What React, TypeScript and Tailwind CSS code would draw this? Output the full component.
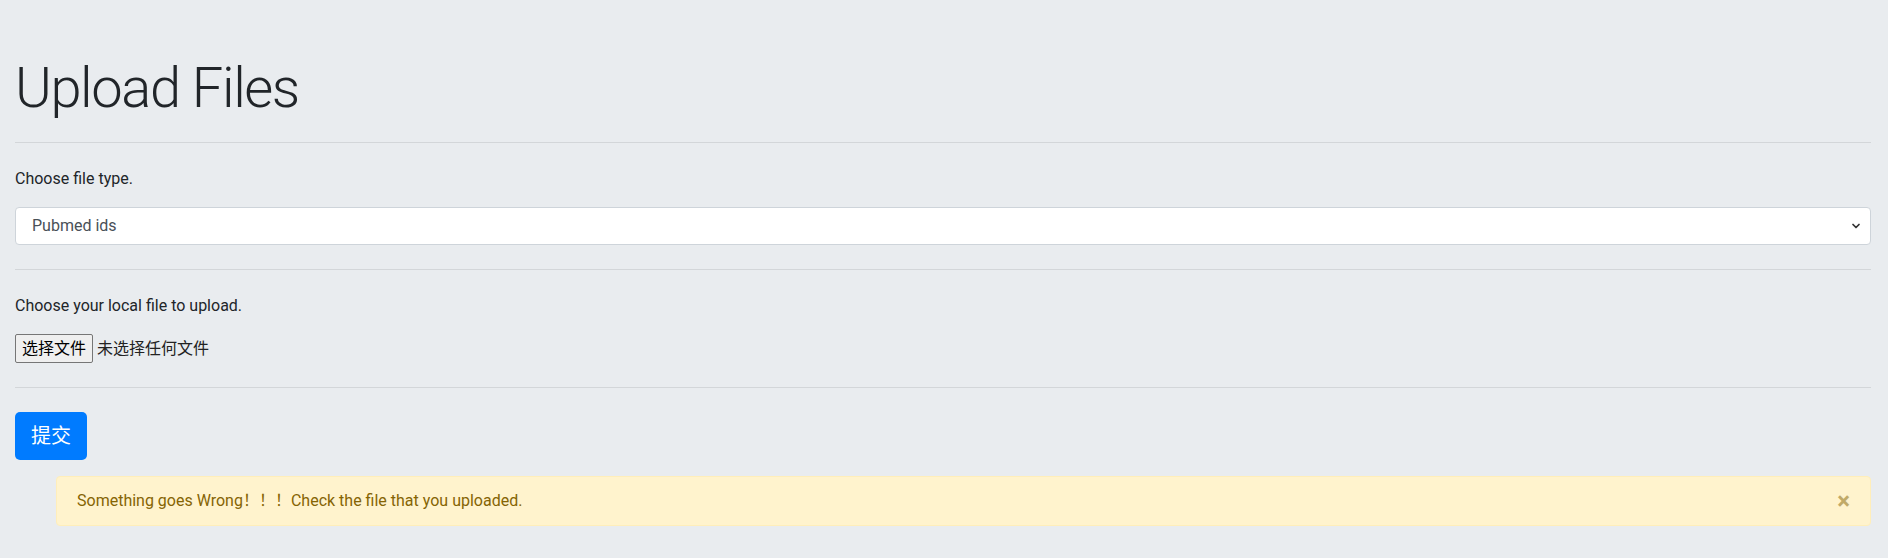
import { ChevronDown } from 'lucide-react';

const App = () => {
    return (
        <div className="min-h-[558px] bg-[#e9ecef] pl-[15px] pr-[17px] pt-[55px] pb-4 text-[16px] leading-6 text-[#212529] [font-family:Roboto,'Noto_Sans_CJK_SC',sans-serif]">
            <h1 className="mb-2 text-[56px] font-light leading-[1.2] tracking-[-1.4px]">Upload Files</h1>
            <hr className="mt-[20px] mb-6 border-t border-[#d3d6d9]" />

            <form>
                <div>
                    <label className="mb-4 block">Choose file type.</label>
                    <div className="relative">
                        <select
                            defaultValue="pubmed"
                            className="block h-[38px] w-full appearance-none rounded-[4px] border border-[#ced4da] bg-white pl-4 pr-8 text-[#495057]">
                            <option value="pubmed">Pubmed ids</option>
                            <option value="pmc">PMC ids</option>
                        </select>
                        <ChevronDown
                            className="pointer-events-none absolute right-[9px] top-[13px] h-3 w-3 text-[#333]"
                            strokeWidth={3.5}
                        />
                    </div>
                </div>

                <hr className="my-6 border-t border-[#d3d6d9]" />

                <div>
                    <label className="mb-4 block">Choose your local file to upload.</label>
                    <div className="flex items-center">
                        <button
                            type="button"
                            className="h-[29px] rounded-[2px] border border-[#767676] bg-[#efefef] px-[6px] leading-6 text-black">
                            选择文件
                        </button>
                        <span className="ml-[4px] text-[#222]">未选择任何文件</span>
                    </div>
                </div>

                <hr className="my-6 border-t border-[#d3d6d9]" />

                <button
                    type="submit"
                    className="h-12 rounded-[5px] bg-[#007bff] px-4 text-[20px] leading-[30px] text-white">
                    提交
                </button>
            </form>

            <div className="relative mt-4 ml-[41px] rounded-[4px] border border-[#ffeeba] bg-[#fff3cd] py-3 pr-16 pl-5 text-[#856404]">
                Something goes Wrong！！！Check the file that you uploaded.
                <button
                    type="button"
                    className="absolute right-0 top-0 px-5 py-3 text-[24px] font-bold leading-6 text-[#856404] opacity-50">
                    ×
                </button>
            </div>
        </div>
    );
};

export default App;
